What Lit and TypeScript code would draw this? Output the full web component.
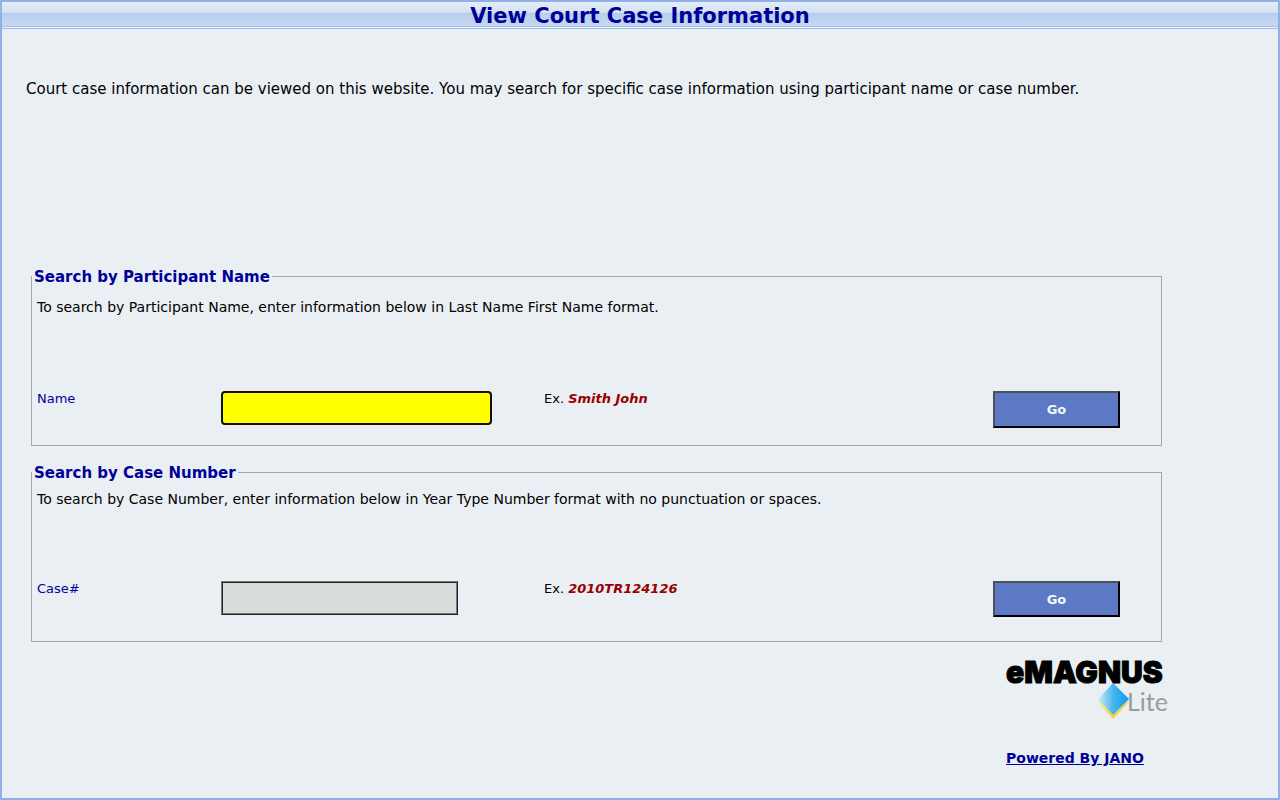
import { LitElement, html, css } from "lit";
import { customElement, property } from "lit/decorators.js";

@customElement("search-panel")
class SearchPanel extends LitElement {
  @property() heading = "";
  @property() hint = "";
  @property() label = "";
  @property() example = "";
  @property({ type: Boolean }) active = false;

  static styles = css`
    :host {
      display: block;
    }
    .panel {
      box-sizing: border-box;
      min-width: 0;
      margin: 0;
      padding: 0 5px 17px;
      border: 1px solid #a0a8ac;
    }
    .heading {
      padding: 1px 2px 0;
      margin-left: -5px;
      font-size: 15px;
      line-height: 16px;
      font-weight: bold;
      color: #000099;
    }
    .hint {
      margin: 0;
      padding-top: 12px;
      font-size: 14px;
      line-height: 20px;
    }
    .row {
      display: grid;
      grid-template-columns: 184fr 323fr 449fr 163fr;
      align-items: start;
      padding-top: 74px;
      font-size: 13px;
      line-height: 16px;
    }
    .compact .hint {
      padding-top: 8px;
    }
    .compact .row {
      padding-top: 72px;
    }
    .compact {
      padding-bottom: 24px;
    }
    .label {
      color: #000099;
    }
    .field {
      box-sizing: border-box;
      width: 237px;
      height: 34px;
      margin: 0;
      padding: 0 6px;
      border: 2px ridge #767676;
      border-radius: 0;
      background: #d8dcda;
      font: 13px "DejaVu Sans", Verdana, sans-serif;
    }
    .field.active {
      width: 271px;
      border: 2px solid #101010;
      border-radius: 4px;
      background: #ffff00;
    }
    .field:focus {
      outline: none;
    }
    .example {
      font-weight: bold;
      font-style: italic;
      color: #990000;
    }
    .go {
      box-sizing: border-box;
      width: 127px;
      height: 36px;
      margin: 0;
      padding: 0;
      border: 2px solid;
      border-color: #4c5058 #000 #000 #4c5058;
      border-radius: 0;
      background: #5d78c4;
      color: #f0f8ff;
      font: bold 13px "DejaVu Sans", Verdana, sans-serif;
    }
    .active-go {
      height: 37px;
    }
  `;

  render() {
    return html`
      <fieldset class="panel ${this.active ? "" : "compact"}">
        <legend class="heading">${this.heading}</legend>
        <p class="hint">${this.hint}</p>
        <div class="row">
          <label class="label" for="field">${this.label}</label>
          <div><input class="field ${this.active ? "active" : ""}" id="field" type="text" /></div>
          <div>Ex. <span class="example">${this.example}</span></div>
          <div><button class="go ${this.active ? "active-go" : ""}" type="button">Go</button></div>
        </div>
      </fieldset>
    `;
  }
}

@customElement("app-root")
class AppRoot extends LitElement {
  static styles = css`
    :host {
      display: block;
      font-family: "DejaVu Sans", Verdana, sans-serif;
      color: #000;
    }
    .page {
      box-sizing: border-box;
      min-height: 100vh;
      border: 2px solid #8fb0e8;
      background: #eaeff3;
    }
    .title {
      margin: 0;
      height: 24px;
      border-bottom: 1px solid #99bbe8;
      background: linear-gradient(#e4edf5 0, #d3e1f1 11px, #a9c5ec 11px, #b9cfee 12px, #c6d7ef 24px);
      text-align: center;
      font-size: 21px;
      line-height: 28px;
      font-weight: bold;
      color: #000099;
    }
    .rule {
      height: 1px;
      border-bottom: 1px solid #99bbe8;
      background: #f2f6fa;
    }
    .main {
      padding: 50px 116px 0 24px;
    }
    .intro {
      margin: 0;
      font-size: 15px;
      line-height: 20px;
    }
    .panels {
      display: grid;
      gap: 18px;
      padding: 169px 0 0 5px;
    }
    .credit {
      display: flex;
      flex-direction: column;
      width: 160px;
      margin: 16px -4px 0 auto;
    }
    .logo {
      display: block;
      overflow: visible;
    }
    .mark {
      font-family: Inter, Lato, sans-serif;
      font-weight: 900;
      font-size: 30px;
      stroke: #000;
      stroke-width: 1px;
    }
    .lite {
      font-family: Lato, sans-serif;
      font-size: 25px;
      fill: #999b9e;
    }
    .link {
      margin-top: 28px;
      font-size: 14px;
      line-height: 20px;
      font-weight: bold;
      color: #000099;
      white-space: nowrap;
    }
  `;

  render() {
    return html`
      <div class="page">
        <h1 class="title">View Court Case Information</h1>
        <div class="rule"></div>
        <main class="main">
          <p class="intro">
            Court case information can be viewed on this website. You may search for specific case information using participant name or case number.
          </p>
          <div class="panels">
            <search-panel
              active
              heading="Search by Participant Name"
              hint="To search by Participant Name, enter information below in Last Name First Name format."
              label="Name"
              example="Smith John"
            ></search-panel>
            <search-panel
              heading="Search by Case Number"
              hint="To search by Case Number, enter information below in Year Type Number format with no punctuation or spaces."
              label="Case#"
              example="2010TR124126"
            ></search-panel>
          </div>
          <div class="credit">
            <svg class="logo" width="160" height="62" viewBox="0 0 160 62" role="img" aria-label="eMAGNUS Lite">
              <defs>
                <linearGradient id="blue" x1="0" y1="0" x2="1" y2="0">
                  <stop offset="0" stop-color="#d3ecf8" />
                  <stop offset="0.5" stop-color="#45b4ef" />
                  <stop offset="1" stop-color="#0a9df0" />
                </linearGradient>
                <linearGradient id="gold" x1="0" y1="0" x2="1" y2="0">
                  <stop offset="0" stop-color="#f4edb8" />
                  <stop offset="0.5" stop-color="#f5d63c" />
                  <stop offset="1" stop-color="#efd84c" />
                </linearGradient>
              </defs>
              <path d="M107 29 L122 45 L107 61 L92 45 Z" fill="url(#gold)" />
              <path d="M107 25 L123 41 L107 57 L92 41 Z" fill="url(#blue)" />
              <text class="mark" x="0" y="25">eMAGNUS</text>
              <text class="lite" x="121" y="53">Lite</text>
            </svg>
            <a class="link" href="#jano">Powered By JANO</a>
          </div>
        </main>
      </div>
    `;
  }
}
